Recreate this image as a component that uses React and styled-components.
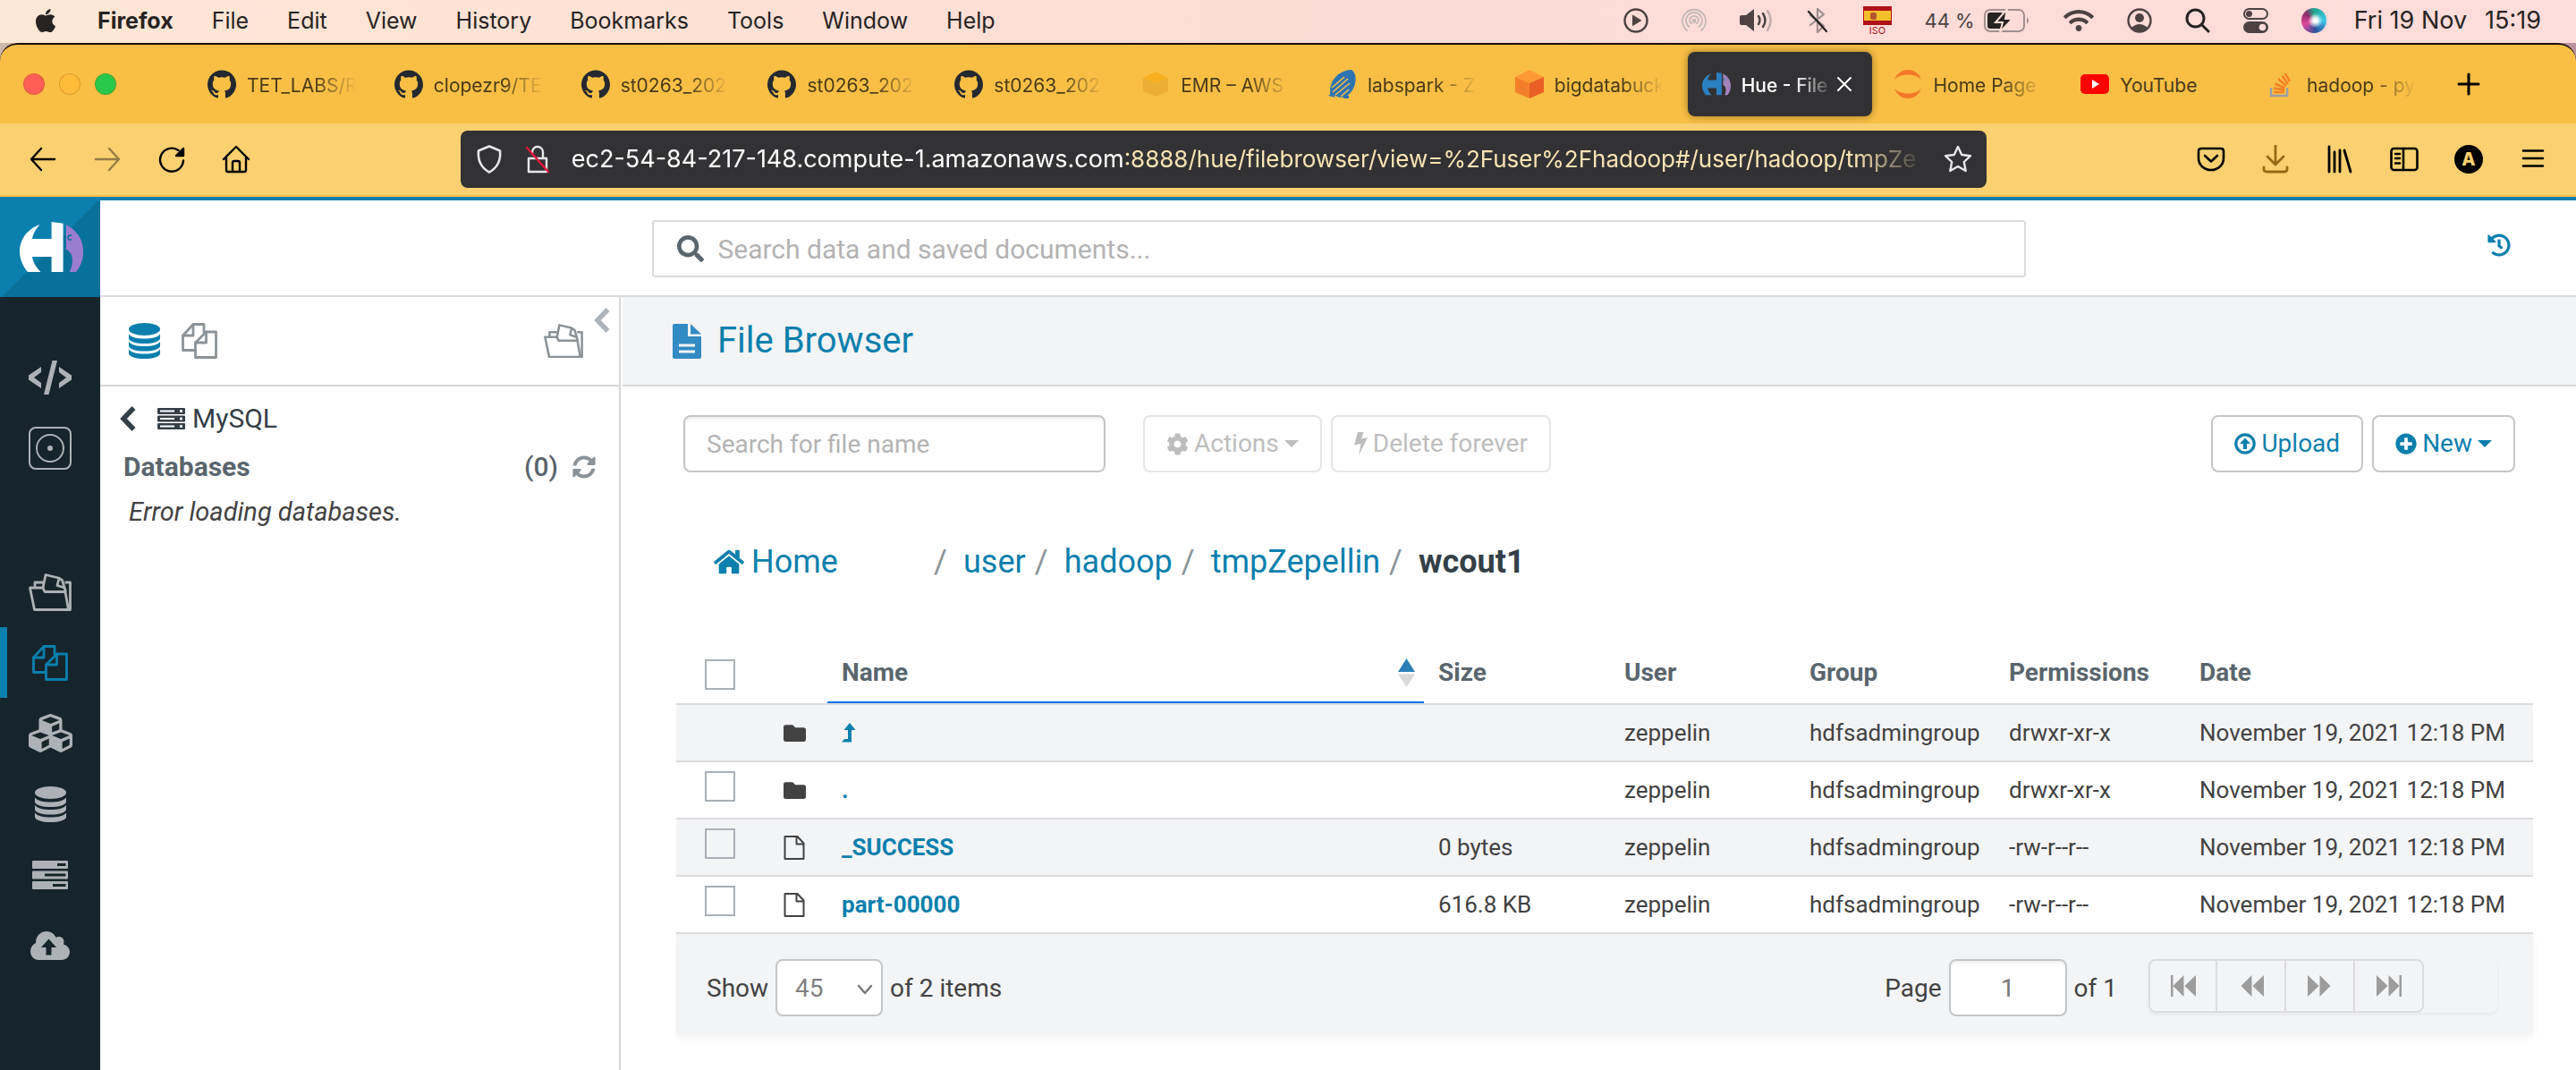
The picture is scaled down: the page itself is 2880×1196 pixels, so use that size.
import React from "react";
import styled, { createGlobalStyle, css } from "styled-components";
import {
  FaApple,
  FaCog,
  FaCubes,
  FaFolder,
  FaHistory,
  FaHome,
  FaPlusCircle,
  FaSearch,
  FaSyncAlt,
  FaWifi,
} from "react-icons/fa";

const c = {
  blue: "#0b7fad",
  amber: "#f9bf45",
  amberLight: "#fad070",
  dark: "#323234",
  rail: "#16252c",
  railIcon: "#adb2b6",
  line: "#dcdcde",
  panel: "#f3f4f6",
  ink: "#424242",
  slate: "#5a656d",
  mute: "#8b9398",
  control: "#c4c6c8",
};

const Global = createGlobalStyle`
  *, *::before, *::after { box-sizing: border-box; }
  body { margin: 0; background: #fff; font-family: Roboto, "Liberation Sans", sans-serif; color: ${c.ink}; }
  button, input, select { font: inherit; color: inherit; margin: 0; }
  button { background: none; border: 0; padding: 0; cursor: pointer; }
  a { color: ${c.blue}; text-decoration: none; }
  svg { display: block; flex: none; }
`;

/* ---------- layout shells ---------- */

const Screen = styled.div`
  min-height: 100vh;
  display: flex;
  flex-direction: column;
`;

const MenuBar = styled.header`
  display: flex;
  justify-content: space-between;
  align-items: center;
  height: 48px;
  padding: 0 39px 2px 36px;
  background: linear-gradient(90deg, #fee7d5, #fedcd6 50%, #fedcd9);
  font: 25px/32px Inter, "Liberation Sans", sans-serif;
  color: #262322;
`;

const MenuList = styled.nav`
  display: flex;
  align-items: center;
  gap: 43px;
`;

const MenuItem = styled.button`
  font-weight: ${(p) => (p.$strong ? 700 : 400)};
`;

const StatusList = styled.div`
  display: flex;
  align-items: center;
  gap: 37px;
  color: #4c4241;
`;

const Battery = styled.div`
  display: flex;
  align-items: center;
  gap: 10px;
  font-size: 22px;
`;

const Clock = styled.time`
  display: flex;
  gap: 20px;
  margin-left: -6px;
  font-size: 27px;
  color: #262322;
`;

const Desktop = styled.div`
  background: linear-gradient(90deg, #cdb7a9, #b9929c);
`;

const BrowserChrome = styled.div`
  border-top: 2px solid #1c120b;
  border-radius: 20px 20px 0 0;
  background: ${c.amber};
  padding-bottom: 2px;
  font-family: Inter, "Liberation Sans", sans-serif;
`;

const TabStrip = styled.div`
  display: flex;
  align-items: center;
  height: 88px;
  padding: 0 156px 0 26px;
`;

const Lights = styled.div`
  flex: none;
  display: flex;
  gap: 16px;
  width: 186px;
`;

const Light = styled.button`
  width: 24px;
  height: 24px;
  border-radius: 50%;
  border: 1px solid rgba(160, 80, 0, 0.3);
  background: ${(p) => p.$tone};
`;

const Tab = styled.div`
  flex: 1;
  min-width: 0;
  display: flex;
  align-items: center;
  gap: 12px;
  height: 72px;
  margin: 0 4px;
  padding: 0 16px;
  border-radius: 8px;
  font-size: 21px;
  line-height: 28px;
  color: #4a3a18;
  ${(p) =>
    p.$active &&
    css`
      background: ${c.dark};
      color: #fff;
      font-weight: 500;
      box-shadow: 0 0 8px rgba(60, 40, 0, 0.5);
      gap: 0;
      padding-right: 22px;
    `}
`;

const TabLabel = styled.span`
  flex: 1;
  min-width: 0;
  overflow: hidden;
  white-space: nowrap;
  padding-top: 4px;
  padding-left: ${(p) => (p.$active ? "12px" : "0")};
  ${(p) => p.$fade && "mask-image: linear-gradient(90deg, #000 60%, transparent 98%);"}
`;

const NewTab = styled.button`
  display: flex;
  justify-content: center;
  width: 72px;
  margin-right: -72px;
  color: #000;
`;

const Toolbar = styled.div`
  display: flex;
  align-items: center;
  justify-content: space-between;
  height: 80px;
  padding: 0 32px;
  background: ${c.amberLight};
`;

const ToolGroup = styled.div`
  display: flex;
  gap: 40px;
  color: #000;
`;

const ToolButton = styled.button`
  opacity: ${(p) => (p.disabled ? 0.4 : 1)};
`;

const UrlBar = styled.div`
  display: flex;
  align-items: center;
  gap: 22px;
  width: 60.6%;
  height: 64px;
  padding: 0 16px;
  border-radius: 8px;
  background: ${c.dark};
  color: #e8e8ea;
`;

const UrlText = styled.div`
  flex: 1;
  min-width: 0;
  overflow: hidden;
  white-space: nowrap;
  outline: none;
  font-size: 26px;
  line-height: 40px;
  color: #fbe3b4;
  mask-image: linear-gradient(90deg, #000 95%, transparent);
`;

const Host = styled.span`
  font-size: 27px;
  color: #fff;
`;

const Page = styled.div`
  flex: 1;
  display: flex;
  border-top: 4px solid ${c.blue};
`;

const Rail = styled.nav`
  width: 112px;
  background: ${c.rail};
  display: flex;
  flex-direction: column;
`;

const LogoLink = styled.a`
  display: flex;
  align-items: center;
  justify-content: center;
  height: 108px;
  margin-bottom: 50px;
  padding: 0 0 4px 3px;
  background: linear-gradient(135deg, ${c.blue} 50%, #08719a 50%);
`;

const RailGroup = styled.div`
  display: flex;
  flex-direction: column;
  margin-bottom: 82px;
`;

const RailItem = styled.a`
  display: flex;
  align-items: center;
  justify-content: center;
  height: 79px;
  border-left: 8px solid ${(p) => (p.$active ? c.blue : "transparent")};
  padding-right: 8px;
  color: ${(p) => (p.$active ? c.blue : c.railIcon)};
`;

const Body = styled.div`
  flex: 1;
  min-width: 0;
  display: flex;
  flex-direction: column;
`;

const TopBar = styled.div`
  display: grid;
  grid-template-columns: 1fr 55.5% 1fr;
  align-items: center;
  height: 108px;
  padding: 2px 0 0 2px;
  border-bottom: 2px solid ${c.line};
`;

const SearchBox = styled.label`
  grid-column: 2;
  display: flex;
  align-items: center;
  gap: 15px;
  height: 64px;
  padding: 0 26px;
  border: 2px solid #d9dade;
  border-radius: 4px;
  color: ${c.slate};
`;

const SearchInput = styled.input`
  flex: 1;
  border: 0;
  outline: none;
  padding: 0;
  background: none;
  font-size: 30px;
  &::placeholder { color: #b3b3b3; }
`;

const HistoryButton = styled.button`
  justify-self: end;
  margin: 0 73px 8px 0;
  color: ${c.blue};
`;

const Columns = styled.div`
  flex: 1;
  display: flex;
`;

/* ---------- assist panel ---------- */

const Assist = styled.aside`
  width: 582px;
  border-right: 2px solid #d5d7da;
`;

const AssistTabs = styled.div`
  display: flex;
  align-items: center;
  gap: 24px;
  height: 100px;
  padding: 0 10px 0 32px;
  border-bottom: 2px solid #d5d7da;
  color: ${c.mute};
`;

const AssistTab = styled.button`
  color: ${(p) => (p.$active ? c.blue : c.mute)};
  margin-left: ${(p) => (p.$end ? "auto" : "0")};
`;

const Collapse = styled.button`
  align-self: flex-start;
  margin: 12px 0 0 -12px;
  color: #adb3b8;
`;

const SourceRow = styled.div`
  display: flex;
  align-items: center;
  height: 40px;
  margin: 16px 24px 0 22px;
  font-size: 30px;
  line-height: 40px;
  color: #343f47;
  gap: 8px;
`;

const BackButton = styled.button`
  margin-right: 16px;
`;

const DatabasesRow = styled.div`
  display: flex;
  align-items: center;
  gap: 16px;
  margin: 14px 26px 0 26px;
  font-size: 30px;
  line-height: 40px;
  color: ${c.slate};
`;

const DatabasesTitle = styled.strong`
  flex: 1;
`;

const Count = styled.span`
  font-weight: 500;
`;

const RefreshButton = styled.button`
  color: ${c.mute};
`;

const ErrorNote = styled.p`
  margin: 10px 32px 0;
  font-size: 29px;
  line-height: 40px;
  font-style: italic;
`;

/* ---------- file browser ---------- */

const Main = styled.main`
  flex: 1;
  min-width: 0;
`;

const TitleBand = styled.div`
  display: flex;
  align-items: center;
  gap: 18px;
  height: 100px;
  margin-left: 2px;
  padding: 0 56px;
  border-bottom: 2px solid #d5d7da;
  background: ${c.panel};
`;

const Title = styled.h1`
  margin: 0;
  font-size: 40px;
  line-height: 48px;
  font-weight: 400;
  color: ${c.blue};
`;

const ActionBar = styled.div`
  display: flex;
  align-items: center;
  gap: 10px;
  margin: 32px 68px 0 70px;
`;

const FilterInput = styled.input`
  width: 472px;
  height: 64px;
  margin-right: 32px;
  padding: 0 24px;
  border: 2px solid ${c.control};
  border-radius: 8px;
  box-shadow: inset 0 2px 3px rgba(0, 0, 0, 0.08);
  font-size: 28px;
  &::placeholder { color: #b3b3b3; }
`;

const ActionButton = styled.button`
  display: flex;
  align-items: center;
  gap: 6px;
  height: 64px;
  padding: 0 24px;
  border: 2px solid ${(p) => (p.disabled ? "#e4e5e6" : c.control)};
  border-radius: 8px;
  background: #fff;
  font-size: 28px;
  line-height: 40px;
  color: ${(p) => (p.disabled ? "#bdbdbd" : c.blue)};
`;

const Caret = styled.span`
  border: 8px solid transparent;
  border-top-color: currentColor;
  border-bottom-width: 0;
`;

const Spacer = styled.div`
  flex: 1;
`;

const Crumbs = styled.nav`
  display: flex;
  align-items: center;
  margin: 76px 104px 66px;
  font-size: 36px;
  line-height: 48px;
`;

const HomeLink = styled.a`
  display: flex;
  align-items: center;
  gap: 8px;
  width: 246px;
`;

const Crumb = styled.span`
  display: flex;
  &::before {
    content: "/";
    width: 33px;
    color: ${c.mute};
  }
  & + & { margin-left: 10px; }
`;

const Current = styled.strong`
  color: #343f47;
`;

const TableArea = styled.div`
  margin: 0 48px 40px 62px;
`;

const Table = styled.table`
  width: 100%;
  table-layout: fixed;
  border-spacing: 0;
  text-align: left;
`;

const Col = styled.col`
  width: ${(p) => (p.$w ? `${p.$w}px` : "auto")};
`;

const Th = styled.th`
  height: 70px;
  padding: 0 16px;
  border-bottom: 2px solid ${c.line};
  font-size: 28px;
  line-height: 36px;
  font-weight: 700;
  color: ${c.slate};
  ${(p) => p.$sorted && "box-shadow: inset 0 -2px #0073e6;"}
`;

const HeadCell = styled.div`
  display: flex;
  align-items: center;
  justify-content: space-between;
  margin-right: -6px;
`;

const Row = styled.tr`
  background: ${(p) => (p.$odd ? c.panel : "#fff")};
`;

const Td = styled.td`
  height: 64px;
  padding: 0 16px;
  border-bottom: 2px solid ${c.line};
  font-size: 26px;
  line-height: 36px;
  white-space: nowrap;
`;

const FileLink = styled.a`
  font-weight: 700;
`;

const CheckCell = styled.div`
  display: flex;
  padding: ${(p) => (p.$head ? "4px 0 0 16px" : "0 0 8px 16px")};
`;

const Checkbox = styled.input`
  appearance: none;
  width: 34px;
  height: 34px;
  border: 2px solid #a9b0b6;
`;

const Footer = styled.div`
  display: flex;
  align-items: flex-start;
  justify-content: space-between;
  height: 112px;
  padding: 28px 40px 0 34px;
  background: ${c.panel};
  box-shadow: 0 4px 8px rgba(0, 0, 0, 0.05);
  font-size: 28px;
`;

const FooterPart = styled.label`
  display: flex;
  align-items: center;
  gap: 8px;
`;

const FooterRight = styled.div`
  display: flex;
  gap: 35px;
`;

const SelectWrap = styled.span`
  position: relative;
  display: flex;
  color: #777;
`;

const Select = styled.select`
  appearance: none;
  width: 120px;
  height: 64px;
  padding: 0 20px;
  border: 2px solid ${c.control};
  border-radius: 8px;
  background: #fff;
  color: #808080;
`;

const SelectArrow = styled.span`
  position: absolute;
  right: 11px;
  top: 28px;
  pointer-events: none;
`;

const PageInput = styled.input`
  width: 132px;
  height: 64px;
  border: 2px solid ${c.control};
  border-radius: 8px;
  text-align: center;
  box-shadow: inset 0 2px 3px rgba(0, 0, 0, 0.08);
  color: #777;
`;

const Pager = styled.div`
  display: flex;
  width: 390px;
  height: 60px;
  border-radius: 8px;
  box-shadow: 0 2px 4px rgba(0, 0, 0, 0.06);
`;

const PagerButton = styled.button`
  display: flex;
  align-items: center;
  justify-content: center;
  width: 77px;
  border: 2px solid ${c.line};
  border-left-width: ${(p) => (p.$first ? "2px" : "0")};
  border-radius: ${(p) => (p.$first ? "8px 0 0 8px" : p.$last ? "0 8px 8px 0" : "0")};
  color: #9c9c9c;
`;

/* ---------- drawings ---------- */

const Line = ({ size = 32, sw = 2, box = 32, color = "currentColor", children, h }) => (
  <svg
    width={size}
    height={h || size}
    viewBox={`0 0 ${box} ${box}`}
    fill="none"
    stroke={color}
    strokeWidth={sw}
    strokeLinecap="round"
    strokeLinejoin="round"
  >
    {children}
  </svg>
);

const Chevron = () => (
  <svg width="18" height="28" viewBox="0 0 18 28" fill="none" stroke="currentColor" strokeWidth="5.500">
    <path d="M15.500 2 4 14l11.500 12" />
  </svg>
);

const BoltIcon = () => (
  <svg width="15" height="26" viewBox="0 0 15 26" fill="currentColor">
    <path d="M4 0h6.500L8 7.500 15 6 5 26l2.500-13L0 14.500z" />
  </svg>
);

const HueMark = ({ width, main, accent }) => (
  <svg width={width} viewBox="0 0 71 56">
    <path fill={main} d="M22.500 3C8 8 0 20 0 33c0 9 4 17 9 23h14.500c-5-5-8.500-11-9.500-17h21.600v17h13V1.700L35.600 0v19H14c1-6 4-11 8.500-16z" />
    <path fill={accent} d="M52 3.500C64 9 71 20 71 33c0 9-3 17-8 23h-7.500c5-8 5-22-3.500-25z" />
    <path d="M58 15.500a2.500 2.500 0 1 0 0 4" fill="none" stroke="#08719a" strokeWidth="1.500" />
  </svg>
);

const DocsIcon = ({ size = 40 }) => (
  <Line size={size} box={40} sw={2.8}>
    <path d="M15 30.500H1.500V14L13 1.500h12V10" />
    <path d="M1.500 14H13V1.500" />
    <path d="M15.500 22 27.500 10h11v28.500h-23z" />
    <path d="M15.500 22h12V10" />
  </Line>
);

const OpenFolderIcon = ({ width = 48 }) => (
  <svg width={width} viewBox="0 0 48 42" fill="none" stroke="currentColor" strokeWidth="2.800" strokeLinejoin="round">
    <path d="M1.500 16h14.500l2 4.500h23l3.500 20h-38z" />
    <path d="M7 16v-6h9.500M16 16l3-14.500 14.500 3.500 4 2.500 4 13M34 5l-2 8.500 8 2.500M40.500 10h6v30.500h-2" />
  </svg>
);

const DatabaseIcon = ({ width = 35 }) => (
  <svg width={width} viewBox="0 0 35 40" fill="currentColor">
    <ellipse cx="17.500" cy="7" rx="17.500" ry="7" />
    {[12.500, 21, 29.500].map((y) => (
      <path key={y} d={`M0 ${y}c3 3.800 10 5 17.500 5s14.500-1.200 17.500-5v5c-1 3.500-8 5.500-17.500 5.500S1 ${y + 8.500} 0 ${y + 5}z`} />
    ))}
  </svg>
);

const CodeIcon = () => (
  <svg width="48" height="38" viewBox="0 0 48 38" fill="currentColor">
    <path d="M14 7v6L6 19l8 6v6L0 21.500v-5zM34 7v6l8 6-8 6v6l14-9.500v-5zM26.500 0H32l-9.500 38H17z" />
  </svg>
);

const DiscIcon = () => (
  <Line size={48} box={48} sw={2}>
    <rect x="1" y="1" width="46" height="46" rx="7" />
    <circle cx="24" cy="24" r="15" />
    <circle cx="24" cy="24" r="2" fill="currentColor" />
  </Line>
);

const TasksIcon = () => (
  <svg width="40" height="32" viewBox="0 0 40 32">
    {[[0, 28], [11.500, 14], [23, 23]].map(([y, x]) => (
      <g key={y}>
        <rect y={y} width="40" height="9" rx="1" fill="currentColor" />
        <rect x={x} y={y + 3} width={37.500 - x} height="3" fill={c.rail} />
      </g>
    ))}
  </svg>
);

const ServerIcon = () => (
  <svg width="31" height="24" viewBox="0 0 31 24" fill="currentColor">
    {[0, 8.500, 17].map((y) => (
      <g key={y}>
        <rect y={y} width="31" height="7" rx="1" />
        <rect x="3" y={y + 2.500} width="16" height="2" fill="#fff" />
        <rect x="25" y={y + 2} width="3" height="3" rx="1" fill="#fff" />
      </g>
    ))}
  </svg>
);

const CloudIcon = () => (
  <svg width="44" height="32" viewBox="0 0 44 32">
    <path fill="currentColor" d="M9 32C4 32 0 27.500 0 22.500c0-4 2-7.500 6-9.500C6 5.500 11 0 18 0c5 0 9 3 10.500 7 4-2.500 9 0 9 4.500 0 1-.2 2-.6 3 4 1 7.100 4.500 7.100 8.500 0 5-4 9-9 9z" />
    <path fill={c.rail} d="M20.500 8.500 29 18h-5.500v8.500h-6V18H12z" />
  </svg>
);

const GithubMark = () => (
  <svg width="32" height="32" viewBox="0 0 24 24" fill="#24292f">
    <path d="M12 .297c-6.630 0-12 5.373-12 12 0 5.303 3.438 9.800 8.205 11.385.6.113.82-.258.82-.577 0-.285-.01-1.040-.015-2.040-3.338.724-4.042-1.610-4.042-1.610C4.422 18.070 3.633 17.700 3.633 17.700c-1.087-.744.084-.729.084-.729 1.205.084 1.838 1.236 1.838 1.236 1.070 1.835 2.809 1.305 3.495.998.108-.776.417-1.305.76-1.605-2.665-.3-5.466-1.332-5.466-5.930 0-1.310.465-2.380 1.235-3.220-.135-.303-.54-1.523.105-3.176 0 0 1.005-.322 3.300 1.230.96-.267 1.980-.399 3-.405 1.020.006 2.040.138 3 .405 2.280-1.552 3.285-1.230 3.285-1.230.645 1.653.24 2.873.12 3.176.765.84 1.230 1.910 1.230 3.220 0 4.610-2.805 5.625-5.475 5.920.42.36.81 1.096.81 2.220 0 1.606-.015 2.896-.015 3.286 0 .315.21.69.825.57C20.565 22.092 24 17.592 24 12.297c0-6.627-5.373-12-12-12" />
  </svg>
);

const Cube = ({ top, left, right, size }) => (
  <svg width="32" height={size} viewBox="0 0 32 32">
    <path fill={top} d="M16 0 32 8 16 15 0 8z" />
    <path fill={left} d="M0 8l16 7v17L0 25z" />
    <path fill={right} d="M32 8 16 15v17l16-7z" />
  </svg>
);

const ZeppelinIcon = () => (
  <svg width="32" height="32" viewBox="0 0 32 32">
    <path fill="#2f74b0" d="M2 27C1 13 10 1 26 0c6 4 6 14 1 23-4 6-9 8-14 8z" />
    <path d="M4 20 18 8M5 25 22 10M8 28 24 15M14 30l9-8" stroke={c.amber} strokeWidth="1.500" />
    <path fill="#2f74b0" d="M0 29l4-3 4 5zM17 29h6v3h-6z" />
  </svg>
);

const JupyterIcon = () => (
  <svg width="32" height="32" viewBox="0 0 32 32" fill="#f37726">
    <path d="M1 11C4 4 9 0 16 0s12 4 15 11C27 7 22 5.500 16 5.500S5 7 1 11zM1 21c3 7 8 11 15 11s12-4 15-11c-4 4-9 5.500-15 5.500S5 25 1 21z" />
  </svg>
);

const YoutubeIcon = () => (
  <svg width="32" height="32" viewBox="0 0 32 32">
    <rect y="5" width="32" height="22" rx="5" fill="#f00" />
    <path fill="#fff" d="M13 11v10l8-5z" />
  </svg>
);

const StackIcon = () => (
  <svg width="32" height="32" viewBox="0 0 32 32" fill="none" strokeWidth="2.500">
    <path stroke="#9aa0a6" d="M4 20v9h18v-9" />
    <path stroke="#f48024" d="M7 25h12M7 20.500l12 2M8.500 15.500l11 5M12 10l9 8M16.500 6.500l6.500 9.500M20 4l5 9" />
  </svg>
);

const FilledFile = () => (
  <svg width="32" height="39" viewBox="0 0 32 39">
    <path fill="#338bc3" d="M2 0h15v14h15v23a2 2 0 0 1-2 2H2a2 2 0 0 1-2-2V2a2 2 0 0 1 2-2zM20 0l12 11.500H20z" />
    <path stroke={c.panel} strokeWidth="3" d="M7 24h18M7 31h18" />
  </svg>
);

const OutlineFile = () => (
  <svg width="24" height="27" viewBox="0 0 24 27" fill="none" stroke={c.ink} strokeWidth="2" strokeLinejoin="round">
    <path d="M1.500 1h14l7 7.500V26h-21zM14.500 1v8.500h8" />
  </svg>
);

const UpArrow = () => (
  <svg width="16" height="22" viewBox="0 0 16 22" fill="currentColor">
    <path d="M9 0l6.500 8H11v13.500H0L3 18h4V8H2.500z" />
  </svg>
);

const SortIcon = () => (
  <svg width="19" height="32" viewBox="0 0 19 32">
    <path fill="#2a7fb8" d="M9.500 0 19 15H0z" />
    <path fill="#d9d9d9" d="M9.500 32 0 17.500h19z" />
  </svg>
);

const UploadIcon = () => (
  <svg width="24" height="24" viewBox="0 0 24 24">
    <circle cx="12" cy="12" r="10.200" fill="none" stroke="currentColor" strokeWidth="3.200" />
    <path fill="currentColor" d="M12 5.500 18 12h-4v6h-4v-6H6z" />
  </svg>
);

const Skip = ({ flip, bar }) => (
  <svg width="30" height="24" viewBox="0 0 30 24" fill="currentColor">
    <g transform={flip ? "matrix(-1 0 0 1 30 0)" : undefined}>
      {bar && <path d="M1 0h2.500v24H1z" />}
      <path d="M15.500 0v24l-12-12zM29 0v24L16.500 12z" />
    </g>
  </svg>
);

const Airdrop = () => (
  <Line size={28} box={28} sw={1.8} color="#c3b9b9">
    <path d="M6 25a13 13 0 1 1 16 0M8.500 21a9 9 0 1 1 11 0M11 17.500a4.800 4.800 0 1 1 6 0" />
    <circle cx="14" cy="14.500" r="1.500" fill="#c3b9b9" />
  </Line>
);

const Speaker = () => (
  <svg width="36" height="28" viewBox="0 0 36 28" fill="none" strokeWidth="2.500" strokeLinecap="round">
    <path fill="#4c4241" d="M0 10q0-2 2-2h5l9-7v25l-9-7H2q-2 0-2-2z" />
    <path stroke="#4c4241" d="M21 9q3 4.500 0 9M26 6q5 8 0 15" />
    <path stroke="#c3aead" d="M31 3q7 10.500 0 22" />
  </svg>
);

const BluetoothOff = () => (
  <Line size={28} box={28} sw={2.2} color="#a08f8e">
    <path d="M6 8l15 12-7 7V1l7 6L6 19" />
    <path stroke="#262322" d="M4 4l20 22" />
  </Line>
);

const FlagIcon = () => (
  <svg width="32" height="36" viewBox="0 0 32 36">
    <rect y="2" width="32" height="21" fill="#b01118" />
    <rect x="1" y="7" width="30" height="11" fill="#f3c02c" />
    <rect x="8" y="9" width="7" height="8" rx="2" fill="#b4562f" />
    <text x="16" y="33" textAnchor="middle" fontFamily="Inter" fontSize="11" fill="#b01118">ISO</text>
  </svg>
);

const BatteryIcon = () => (
  <svg width="52" height="26" viewBox="0 0 52 26">
    <rect x="1" y="1" width="44" height="24" rx="6" fill="none" stroke="#a08f8e" strokeWidth="2" />
    <path d="M48 9q4 4 0 8z" fill="#a08f8e" />
    <rect x="4" y="4" width="18" height="18" rx="3" fill="#262322" />
    <path d="M26 0 13 15h8l-3 11 14-15h-8z" fill="#262322" stroke="#fedcd6" strokeWidth="2" />
  </svg>
);

const UserIcon = () => (
  <svg width="28" height="28" viewBox="0 0 28 28">
    <circle cx="14" cy="14" r="12.500" fill="none" stroke="currentColor" strokeWidth="2.400" />
    <circle cx="14" cy="11" r="5" fill="currentColor" />
    <path d="M5 22q9-8 18 0-9 8-18 0z" fill="currentColor" />
  </svg>
);

const ControlCenter = () => (
  <svg width="28" height="28" viewBox="0 0 28 28">
    <rect x="1" y="1" width="26" height="11" rx="5.500" fill="none" stroke="currentColor" strokeWidth="2" />
    <circle cx="6.500" cy="6.500" r="3.500" fill="currentColor" />
    <rect y="15" width="28" height="13" rx="6.500" fill="currentColor" />
    <circle cx="21.500" cy="21.500" r="3.800" fill="#fedcd9" />
  </svg>
);

const Siri = styled.span`
  width: 28px;
  height: 28px;
  border-radius: 50%;
  background: radial-gradient(circle at 55% 50%, #fff 0 10%, transparent 40%),
    conic-gradient(#1fa58a, #3cc6e8 90deg, #2c4f9c 170deg, #e0489a 250deg, #8c2a6a 310deg, #1fa58a);
`;

/* ---------- data ---------- */

const menus = ["File", "Edit", "View", "History", "Bookmarks", "Tools", "Window", "Help"];

const gold = <Cube size="28" top="#f8b020" left="#edae35" right="#edae35" />;
const orange = <Cube size="32" top="#ff9a33" left="#f47f2a" right="#e95f26" />;

const tabs = [
  { icon: <GithubMark />, label: "TET_LABS/R" },
  { icon: <GithubMark />, label: "clopezr9/TE" },
  { icon: <GithubMark />, label: "st0263_202" },
  { icon: <GithubMark />, label: "st0263_202" },
  { icon: <GithubMark />, label: "st0263_202" },
  { icon: gold, label: "EMR – AWS" },
  { icon: <ZeppelinIcon />, label: "labspark - Z" },
  { icon: orange, label: "bigdatabuck" },
  { icon: <HueMark width={32} main="#2a7fc0" accent="#a583bd" />, label: "Hue - File", active: true },
  { icon: <JupyterIcon />, label: "Home Page" },
  { icon: <YoutubeIcon />, label: "YouTube", whole: true },
  { icon: <StackIcon />, label: "hadoop - py" },
];

const files = [
  { name: "up", dir: true, up: true, size: "", perm: "drwxr-xr-x" },
  { name: ".", dir: true, size: "", perm: "drwxr-xr-x" },
  { name: "_SUCCESS", size: "0 bytes", perm: "-rw-r--r--" },
  { name: "part-00000", size: "616.8 KB", perm: "-rw-r--r--" },
];

/* ---------- sections ---------- */

function SystemBar() {
  return (
    <MenuBar>
      <MenuList>
        <MenuItem aria-label="Apple"><FaApple size={30} /></MenuItem>
        <MenuItem $strong>Firefox</MenuItem>
        {menus.map((m) => <MenuItem key={m}>{m}</MenuItem>)}
      </MenuList>
      <StatusList>
        <Line size={28} box={28} sw={2.4}>
          <circle cx="14" cy="14" r="12.500" />
          <path fill="currentColor" strokeWidth="1" d="M10.500 8.500v11l9-5.500z" />
        </Line>
        <Airdrop />
        <Speaker />
        <BluetoothOff />
        <FlagIcon />
        <Battery>44 % <BatteryIcon /></Battery>
        <FaWifi size={34} />
        <UserIcon />
        <Line size={28} box={28} sw={3} color="#262322">
          <circle cx="11.500" cy="11.500" r="9.500" />
          <path d="M18.500 18.500 26 26" />
        </Line>
        <ControlCenter />
        <Siri />
        <Clock><span>Fri 19 Nov</span><span>15:19</span></Clock>
      </StatusList>
    </MenuBar>
  );
}

function Browser() {
  return (
    <Desktop>
      <BrowserChrome>
        <TabStrip>
          <Lights>
            <Light $tone="#ff5f57" aria-label="Close window" />
            <Light $tone="#febc3a" aria-label="Minimise window" />
            <Light $tone="#28c94b" aria-label="Zoom window" />
          </Lights>
          {tabs.map((t, i) => (
            <Tab key={i} $active={t.active}>
              {t.icon}
              <TabLabel $active={t.active} $fade={!t.whole}>{t.label}</TabLabel>
              {t.active && (
                <ToolButton aria-label="Close tab">
                  <Line size={18} box={18} sw={2}><path d="M2 2l14 14M16 2 2 16" /></Line>
                </ToolButton>
              )}
            </Tab>
          ))}
          <NewTab aria-label="New tab">
            <Line size={26} box={26} sw={3}><path d="M13 2v22M2 13h22" /></Line>
          </NewTab>
        </TabStrip>
        <Toolbar>
          <ToolGroup>
            <ToolButton aria-label="Back"><Line sw={2.4}><path d="M29 16H3M14 4 3 16l11 12" /></Line></ToolButton>
            <ToolButton aria-label="Forward" disabled><Line sw={2.4}><path d="M3 16h26M18 4l11 12-11 12" /></Line></ToolButton>
            <ToolButton aria-label="Reload">
              <Line sw={2.4}><path d="M29 17.500A13 13 0 1 1 23.500 6" /><path fill="currentColor" d="M29 4v8h-8z" /></Line>
            </ToolButton>
            <ToolButton aria-label="Home">
              <Line sw={2.4}><path d="M2 16 16 2l14 14M5 14v14q0 2 2 2h18q2 0 2-2V14M12 30V20q0-2 2-2h4q2 0 2 2v10" /></Line>
            </ToolButton>
          </ToolGroup>
          <UrlBar>
            <Line sw={2.6}><path d="M16 1.500 4 6.500c-1 10 3 19 12 24 9-5 13-14 12-24z" /></Line>
            <Line sw={2.4}>
              <path d="M6 15h20v15H6zM10 10V8a6 6 0 0 1 12 0v7" />
              <path stroke="#e3173f" d="M4 3l24 27" />
            </Line>
            <UrlText role="textbox" aria-label="Address" tabIndex={0}>
              <Host>ec2-54-84-217-148.compute-1.amazonaws.com</Host>:8888/hue/filebrowser/view=%2Fuser%2Fhadoop#/user/hadoop/tmpZe
            </UrlText>
            <ToolButton aria-label="Bookmark">
              <Line sw={2.4}><path d="M16 2l4.200 9 9.800 1.200-7.200 6.800 1.900 10L16 24l-8.700 5 1.900-10L2 12.200 11.800 11z" /></Line>
            </ToolButton>
          </UrlBar>
          <ToolGroup>
            <ToolButton aria-label="Pocket"><Line sw={2.6}><path d="M5 4h22q3 0 3 3v8a14 13 0 0 1-28 0V7q0-3 3-3zM9 12l7 6.500 7-6.500" /></Line></ToolButton>
            <ToolButton aria-label="Downloads"><Line sw={2.8} color="#946a15"><path d="M16 1v21M7 13l9 9 9-9M3 25v2q0 3 3 3h20q3 0 3-3v-2" /></Line></ToolButton>
            <ToolButton aria-label="Library"><Line sw={2.8}><path d="M4 2v28M10 8v22M16 6v24M21 6l7 24" /></Line></ToolButton>
            <ToolButton aria-label="Sidebar"><Line sw={2.6}><rect x="1.500" y="4" width="29" height="24" rx="3" /><path d="M15 4v24M6 10h5M6 15h5M6 20.500h5" /></Line></ToolButton>
            <ToolButton aria-label="Account">
              <svg width="32" height="32" viewBox="0 0 32 32">
                <circle cx="16" cy="16" r="16" />
                <text x="16" y="23" textAnchor="middle" fontFamily="Inter" fontWeight="800" fontSize="20" fill={c.amberLight}>A</text>
              </svg>
            </ToolButton>
            <ToolButton aria-label="Menu"><Line sw={2.6}><path d="M5 6.500h22M5 15h22M5 23.500h22" /></Line></ToolButton>
          </ToolGroup>
        </Toolbar>
      </BrowserChrome>
    </Desktop>
  );
}

function SideRail() {
  return (
    <Rail>
      <LogoLink href="#" aria-label="Hue"><HueMark width={71} main="#fff" accent="#9b7dd0" /></LogoLink>
      <RailGroup>
        <RailItem href="#" aria-label="Editor"><CodeIcon /></RailItem>
        <RailItem href="#" aria-label="Dashboard"><DiscIcon /></RailItem>
      </RailGroup>
      <RailItem href="#" aria-label="Documents"><OpenFolderIcon /></RailItem>
      <RailItem href="#" aria-label="Files" $active><DocsIcon /></RailItem>
      <RailItem href="#" aria-label="S3"><FaCubes size={49} /></RailItem>
      <RailItem href="#" aria-label="Tables"><DatabaseIcon /></RailItem>
      <RailItem href="#" aria-label="Jobs"><TasksIcon /></RailItem>
      <RailItem href="#" aria-label="Importer"><CloudIcon /></RailItem>
    </Rail>
  );
}

function AssistPanel() {
  return (
    <Assist>
      <AssistTabs>
        <AssistTab $active aria-label="Databases"><DatabaseIcon /></AssistTab>
        <AssistTab aria-label="Files"><DocsIcon /></AssistTab>
        <AssistTab $end aria-label="Documents"><OpenFolderIcon width={44} /></AssistTab>
        <Collapse aria-label="Collapse panel"><Chevron /></Collapse>
      </AssistTabs>
      <SourceRow>
        <BackButton aria-label="Back to sources"><Chevron /></BackButton>
        <ServerIcon />
        <span>MySQL</span>
      </SourceRow>
      <DatabasesRow>
        <DatabasesTitle>Databases</DatabasesTitle>
        <Count>(0)</Count>
        <RefreshButton aria-label="Refresh"><FaSyncAlt size={26} /></RefreshButton>
      </DatabasesRow>
      <ErrorNote>Error loading databases.</ErrorNote>
    </Assist>
  );
}

function FileTable() {
  return (
    <Table>
      <colgroup>
        <Col $w={104} /><Col $w={65} /><Col /><Col $w={208} /><Col $w={207} /><Col $w={223} /><Col $w={213} /><Col $w={389} />
      </colgroup>
      <thead>
        <tr>
          <Th><CheckCell $head><Checkbox type="checkbox" aria-label="Select all" /></CheckCell></Th>
          <Th />
          <Th $sorted><HeadCell>Name <SortIcon /></HeadCell></Th>
          <Th>Size</Th>
          <Th>User</Th>
          <Th>Group</Th>
          <Th>Permissions</Th>
          <Th>Date</Th>
        </tr>
      </thead>
      <tbody>
        {files.map((f, i) => (
          <Row key={f.name} $odd={i % 2 === 0}>
            <Td>{!f.up && <CheckCell><Checkbox type="checkbox" aria-label={`Select ${f.name}`} /></CheckCell>}</Td>
            <Td>{f.dir ? <FaFolder size={25} /> : <OutlineFile />}</Td>
            <Td><FileLink href="#" aria-label={f.up ? "Parent folder" : undefined}>{f.up ? <UpArrow /> : f.name}</FileLink></Td>
            <Td>{f.size}</Td>
            <Td>zeppelin</Td>
            <Td>hdfsadmingroup</Td>
            <Td>{f.perm}</Td>
            <Td>November 19, 2021 12:18 PM</Td>
          </Row>
        ))}
      </tbody>
    </Table>
  );
}

function FileBrowser() {
  return (
    <Main>
      <TitleBand><FilledFile /><Title>File Browser</Title></TitleBand>
      <ActionBar>
        <FilterInput placeholder="Search for file name" aria-label="Search for file name" />
        <ActionButton disabled><FaCog size={25} />Actions<Caret /></ActionButton>
        <ActionButton disabled><BoltIcon />Delete forever</ActionButton>
        <Spacer />
        <ActionButton><UploadIcon />Upload</ActionButton>
        <ActionButton><FaPlusCircle size={24} />New<Caret /></ActionButton>
      </ActionBar>
      <Crumbs aria-label="Path">
        <HomeLink href="#"><FaHome size={34} />Home</HomeLink>
        <Crumb><a href="#">user</a></Crumb>
        <Crumb><a href="#">hadoop</a></Crumb>
        <Crumb><a href="#">tmpZepellin</a></Crumb>
        <Crumb><Current>wcout1</Current></Crumb>
      </Crumbs>
      <TableArea>
        <FileTable />
        <Footer>
          <FooterPart>
            Show
            <SelectWrap>
              <Select defaultValue="45"><option>45</option></Select>
              <SelectArrow>
                <Line size={18} box={18} sw={2.4}><path d="M2 2l7 8 7-8" /></Line>
              </SelectArrow>
            </SelectWrap>
            of 2 items
          </FooterPart>
          <FooterRight>
            <FooterPart>Page <PageInput defaultValue="1" /> of 1</FooterPart>
            <Pager>
              <PagerButton $first aria-label="First page"><Skip bar /></PagerButton>
              <PagerButton aria-label="Previous page"><Skip /></PagerButton>
              <PagerButton aria-label="Next page"><Skip flip /></PagerButton>
              <PagerButton $last aria-label="Last page"><Skip flip bar /></PagerButton>
            </Pager>
          </FooterRight>
        </Footer>
      </TableArea>
    </Main>
  );
}

export default function App() {
  return (
    <>
      <Global />
      <Screen>
        <SystemBar />
        <Browser />
        <Page>
          <SideRail />
          <Body>
            <TopBar>
              <SearchBox>
                <FaSearch size={30} />
                <SearchInput placeholder="Search data and saved documents..." aria-label="Search data and saved documents" />
              </SearchBox>
              <HistoryButton aria-label="History"><FaHistory size={26} /></HistoryButton>
            </TopBar>
            <Columns>
              <AssistPanel />
              <FileBrowser />
            </Columns>
          </Body>
        </Page>
      </Screen>
    </>
  );
}
